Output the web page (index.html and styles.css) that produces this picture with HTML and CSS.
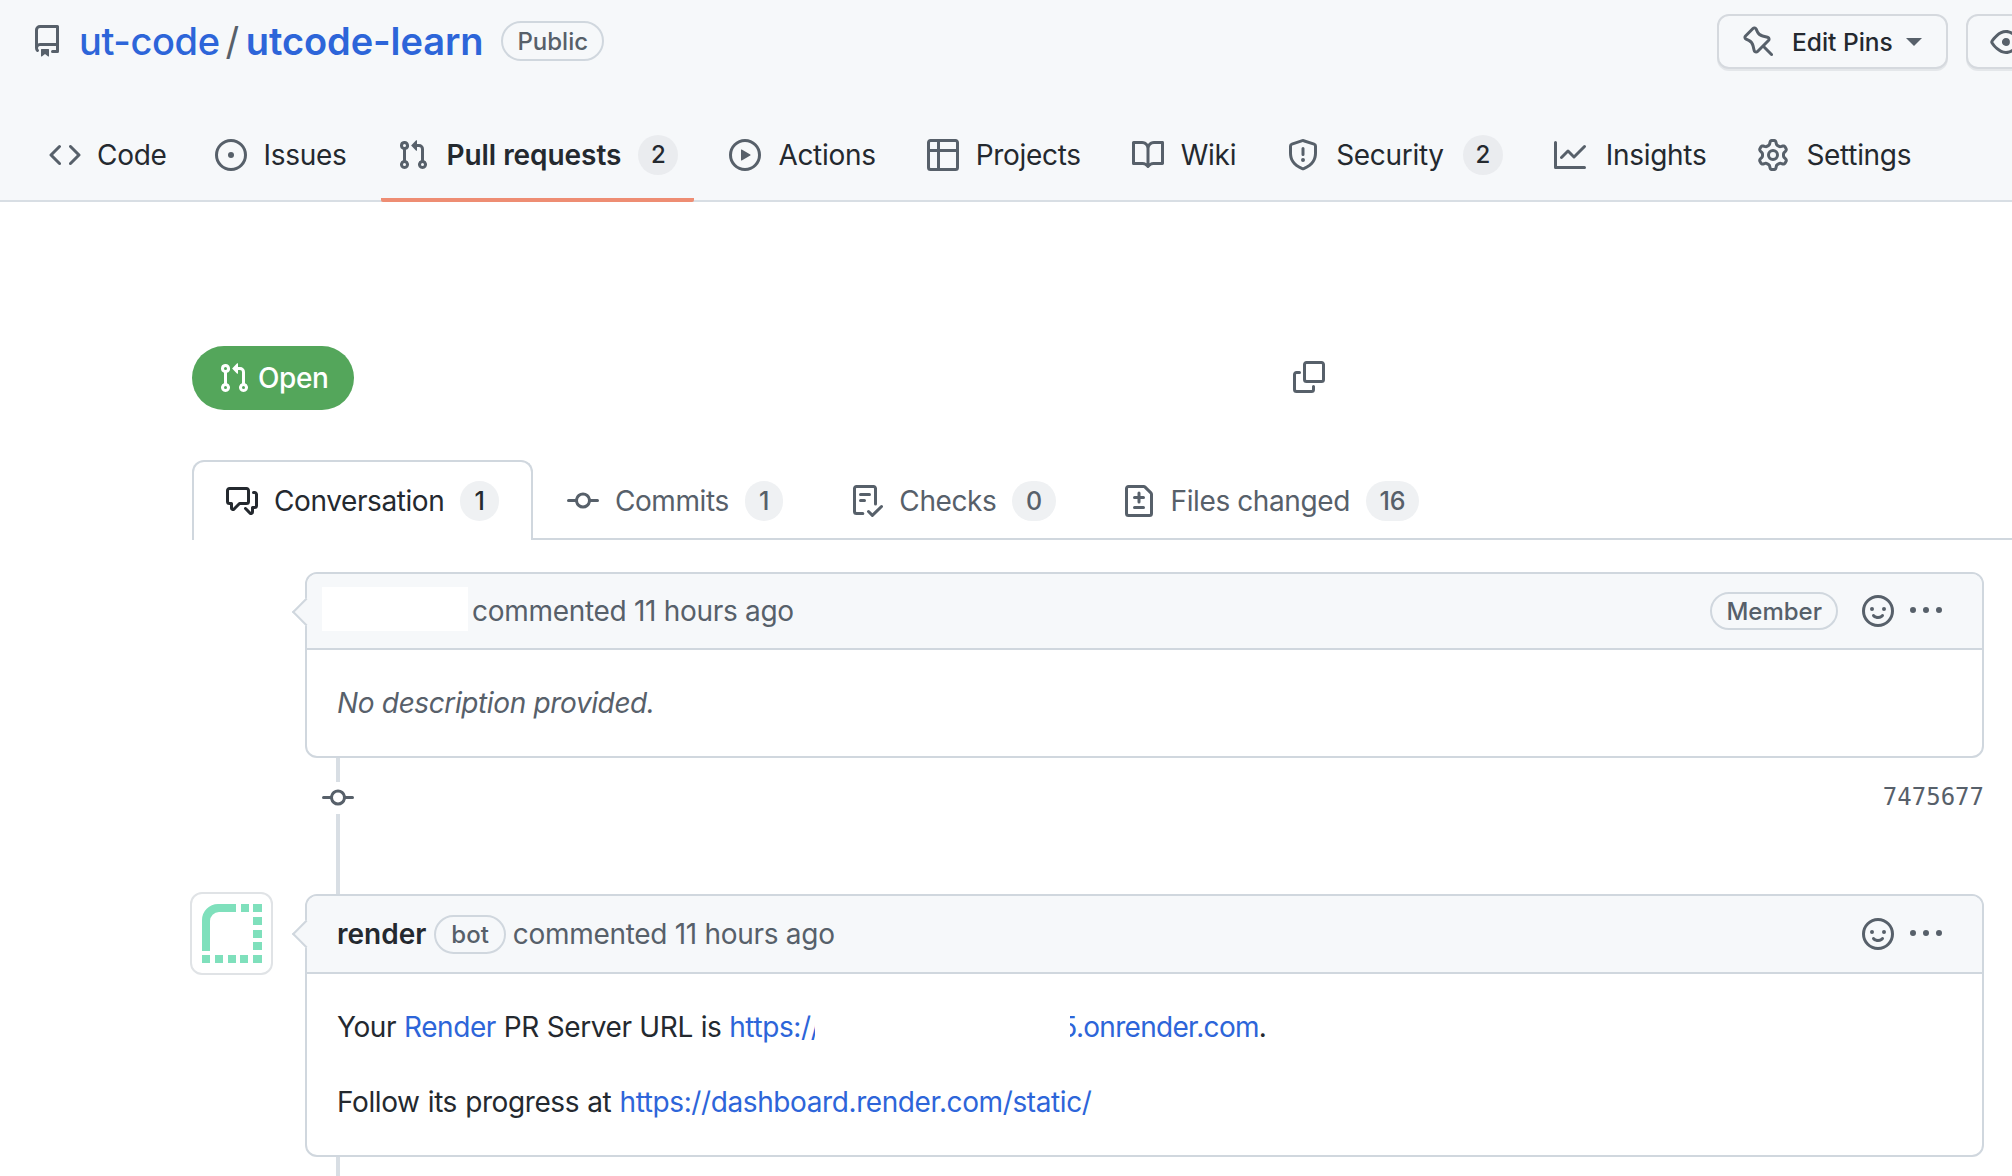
FILE: index.html
```html
<!DOCTYPE html>
<html lang="en">
<head>
    <meta charset="UTF-8">
    <meta name="viewport" content="width=device-width, initial-scale=1.0">
    <title>Pull request - ut-code/utcode-learn</title>
    <link rel="stylesheet" href="styles.css">
</head>
<body>
    <!-- icon sprite -->
    <svg class="sprite" aria-hidden="true">
        <symbol id="i-repo" viewBox="0 0 16 16"><path d="M2 2.5A2.5 2.5 0 0 1 4.5 0h8.75a.75.75 0 0 1 .75.75v12.5a.75.75 0 0 1-.75.75h-2.5a.75.75 0 0 1 0-1.5h1.75v-2h-8a1 1 0 0 0-.714 1.7.75.75 0 1 1-1.072 1.05A2.495 2.495 0 0 1 2 11.5Zm10.5-1h-8a1 1 0 0 0-1 1v6.708A2.486 2.486 0 0 1 4.5 9h8ZM5 12.25a.25.25 0 0 1 .25-.25h3.5a.25.25 0 0 1 .25.25v3.25a.25.25 0 0 1-.4.2l-1.45-1.087a.249.249 0 0 0-.3 0L5.4 15.7a.25.25 0 0 1-.4-.2Z"/></symbol>
        <symbol id="i-pin" viewBox="0 0 16 16"><path d="M4.456.734a1.75 1.75 0 0 1 2.826.504l.613 1.327a3.081 3.081 0 0 0 2.084 1.707l2.454.584c1.332.317 1.8 1.972.832 2.94L11.06 10l3.72 3.72a.748.748 0 0 1-.332 1.265.75.75 0 0 1-.729-.205L10 11.06l-2.204 2.205c-.968.968-2.623.5-2.94-.832l-.584-2.454a3.081 3.081 0 0 0-1.707-2.084l-1.327-.613a1.75 1.75 0 0 1-.504-2.826L4.456.734ZM5.92 1.866a.25.25 0 0 0-.404-.072L1.794 5.516a.25.25 0 0 0 .072.404l1.328.613A4.582 4.582 0 0 1 5.73 9.63l.584 2.454a.25.25 0 0 0 .42.12l5.47-5.47a.25.25 0 0 0-.12-.42l-2.454-.584a4.583 4.583 0 0 1-3.098-2.537Z"/></symbol>
        <symbol id="i-eye" viewBox="0 0 16 16"><path d="M8 2c1.981 0 3.671.992 4.933 2.078 1.27 1.091 2.187 2.345 2.637 3.023a1.62 1.62 0 0 1 0 1.798c-.45.678-1.367 1.932-2.637 3.023C11.67 13.008 9.981 14 8 14c-1.981 0-3.671-.992-4.933-2.078C1.797 10.83.88 9.576.43 8.898a1.62 1.62 0 0 1 0-1.798c.45-.677 1.367-1.931 2.637-3.022C4.33 2.992 6.019 2 8 2ZM1.679 7.932a.12.12 0 0 0 0 .136c.411.622 1.241 1.75 2.366 2.717C5.176 11.758 6.527 12.5 8 12.5c1.473 0 2.825-.742 3.955-1.715 1.124-.967 1.954-2.096 2.366-2.717a.12.12 0 0 0 0-.136c-.412-.621-1.242-1.75-2.366-2.717C10.824 4.242 9.473 3.5 8 3.5c-1.473 0-2.825.742-3.955 1.715-1.124.967-1.954 2.096-2.366 2.717ZM8 10a2 2 0 1 1-.001-3.999A2 2 0 0 1 8 10Z"/></symbol>
        <symbol id="i-code" viewBox="0 0 16 16"><path d="m11.28 3.22 4.25 4.25a.75.75 0 0 1 0 1.06l-4.25 4.25a.749.749 0 0 1-1.275-.326.749.749 0 0 1 .215-.734L13.94 8l-3.72-3.72a.749.749 0 0 1 .326-1.275.749.749 0 0 1 .734.215Zm-6.56 0a.751.751 0 0 1 1.042.018.751.751 0 0 1 .018 1.042L2.06 8l3.72 3.72a.749.749 0 0 1-.326 1.275.749.749 0 0 1-.734-.215L.47 8.53a.75.75 0 0 1 0-1.06Z"/></symbol>
        <symbol id="i-issue" viewBox="0 0 16 16"><path d="M8 9.5a1.5 1.5 0 1 0 0-3 1.5 1.5 0 0 0 0 3Z"/><path d="M8 0a8 8 0 1 1 0 16A8 8 0 0 1 8 0ZM1.5 8a6.5 6.5 0 1 0 13 0 6.5 6.5 0 0 0-13 0Z"/></symbol>
        <symbol id="i-pull" viewBox="0 0 16 16"><path d="M1.5 3.25a2.25 2.25 0 1 1 3 2.122v5.256a2.251 2.251 0 1 1-1.5 0V5.372A2.25 2.25 0 0 1 1.5 3.25Zm5.677-.177L9.573.677A.25.25 0 0 1 10 .854V2.5h1A2.5 2.5 0 0 1 13.5 5v5.628a2.251 2.251 0 1 1-1.5 0V5a1 1 0 0 0-1-1h-1v1.646a.25.25 0 0 1-.427.177L7.177 3.427a.25.25 0 0 1 0-.354ZM3.75 2.5a.75.75 0 1 0 0 1.5.75.75 0 0 0 0-1.5Zm0 9.5a.75.75 0 1 0 0 1.5.75.75 0 0 0 0-1.5Zm8.25.75a.75.75 0 1 0 1.5 0 .75.75 0 0 0-1.5 0Z"/></symbol>
        <symbol id="i-play" viewBox="0 0 16 16"><path d="M8 0a8 8 0 1 1 0 16A8 8 0 0 1 8 0ZM1.5 8a6.5 6.5 0 1 0 13 0 6.5 6.5 0 0 0-13 0Zm4.879-2.773 4.264 2.559a.25.25 0 0 1 0 .428l-4.264 2.559A.25.25 0 0 1 6 10.559V5.442a.25.25 0 0 1 .379-.215Z"/></symbol>
        <symbol id="i-table" viewBox="0 0 16 16"><path d="M0 1.75C0 .784.784 0 1.75 0h12.5C15.216 0 16 .784 16 1.75v12.5A1.75 1.75 0 0 1 14.25 16H1.75A1.75 1.75 0 0 1 0 14.25ZM6.5 6.5v8h7.75a.25.25 0 0 0 .25-.25V6.5Zm8-1.5V1.75a.25.25 0 0 0-.25-.25H6.5V5Zm-13 1.5v7.75c0 .138.112.25.25.25H5v-8ZM5 5V1.5H1.75a.25.25 0 0 0-.25.25V5Z"/></symbol>
        <symbol id="i-book" viewBox="0 0 16 16"><path d="M0 1.75A.75.75 0 0 1 .75 1h4.253c1.227 0 2.317.59 3 1.501A3.743 3.743 0 0 1 11.006 1h4.245a.75.75 0 0 1 .75.75v10.5a.75.75 0 0 1-.75.75h-4.507a2.25 2.25 0 0 0-1.591.659l-.622.621a.75.75 0 0 1-1.06 0l-.622-.621A2.25 2.25 0 0 0 5.258 13H.75a.75.75 0 0 1-.75-.75Zm7.251 10.324.004-5.073-.002-2.253A2.25 2.25 0 0 0 5.003 2.5H1.5v9h3.757a3.75 3.75 0 0 1 1.994.574ZM8.755 4.75l-.004 7.322a3.752 3.752 0 0 1 1.992-.572H14.5v-9h-3.495a2.25 2.25 0 0 0-2.25 2.25Z"/></symbol>
        <symbol id="i-shield" viewBox="0 0 16 16"><path d="M7.467.133a1.748 1.748 0 0 1 1.066 0l5.25 1.68A1.75 1.75 0 0 1 15 3.48V7c0 1.566-.32 3.182-1.303 4.682-.983 1.498-2.585 2.813-5.032 3.855a1.697 1.697 0 0 1-1.33 0c-2.447-1.042-4.049-2.357-5.032-3.855C1.32 10.182 1 8.566 1 7V3.48a1.75 1.75 0 0 1 1.217-1.667Zm.61 1.429a.25.25 0 0 0-.153 0l-5.25 1.68a.25.25 0 0 0-.174.238V7c0 1.358.275 2.666 1.057 3.86.784 1.194 2.121 2.34 4.366 3.297a.196.196 0 0 0 .154 0c2.245-.956 3.582-2.104 4.366-3.298C13.225 9.666 13.5 8.36 13.5 7V3.48a.251.251 0 0 0-.174-.237l-5.25-1.68ZM8.75 4.75v3a.75.75 0 0 1-1.5 0v-3a.75.75 0 0 1 1.5 0ZM9 10.5a1 1 0 1 1-2 0 1 1 0 0 1 2 0Z"/></symbol>
        <symbol id="i-graph" viewBox="0 0 16 16"><path d="M1.5 1.75V13.5h13.75a.75.75 0 0 1 0 1.5H.75a.75.75 0 0 1-.75-.75V1.75a.75.75 0 0 1 1.5 0Zm14.28 2.53-5.25 5.25a.75.75 0 0 1-1.06 0L7 7.06 4.28 9.78a.751.751 0 0 1-1.042-.018.751.751 0 0 1-.018-1.042l3.25-3.25a.75.75 0 0 1 1.06 0L10 7.94l4.72-4.72a.751.751 0 0 1 1.042.018.751.751 0 0 1 .018 1.042Z"/></symbol>
        <symbol id="i-gear" viewBox="0 0 16 16"><path d="M8 0a8.2 8.2 0 0 1 .701.031C9.444.095 9.99.645 10.16 1.29l.288 1.107c.018.066.079.158.212.224.231.114.454.243.668.386.123.082.233.09.299.071l1.103-.303c.644-.176 1.392.021 1.82.63.27.385.506.792.704 1.218.315.675.111 1.422-.364 1.891l-.814.806c-.049.048-.098.147-.088.294.016.257.016.515 0 .772-.01.147.038.246.088.294l.814.806c.475.469.679 1.216.364 1.891a7.977 7.977 0 0 1-.704 1.217c-.428.61-1.176.807-1.82.63l-1.102-.302c-.067-.019-.177-.011-.3.071a5.909 5.909 0 0 1-.668.386c-.133.066-.194.158-.211.224l-.29 1.106c-.168.646-.715 1.196-1.458 1.26a8.006 8.006 0 0 1-1.402 0c-.743-.064-1.289-.614-1.458-1.26l-.289-1.106c-.018-.066-.079-.158-.212-.224a5.738 5.738 0 0 1-.668-.386c-.123-.082-.233-.09-.299-.071l-1.103.303c-.644.176-1.392-.021-1.82-.63a8.12 8.12 0 0 1-.704-1.218c-.315-.675-.111-1.422.363-1.891l.815-.806c.05-.048.098-.147.088-.294a6.214 6.214 0 0 1 0-.772c.01-.147-.038-.246-.088-.294l-.815-.806C.635 6.045.431 5.298.746 4.623a7.92 7.92 0 0 1 .704-1.217c.428-.61 1.176-.807 1.82-.63l1.102.302c.067.019.177.011.3-.071.214-.143.437-.272.668-.386.133-.066.194-.158.211-.224l.29-1.106C6.009.645 6.556.095 7.299.03 7.53.01 7.764 0 8 0Zm-.571 1.525c-.036.003-.108.036-.137.146l-.289 1.105c-.147.561-.549.967-.998 1.189-.173.086-.34.183-.5.29-.417.278-.97.423-1.529.27l-1.103-.303c-.109-.03-.175.016-.195.045-.22.312-.412.644-.573.99-.014.031-.021.11.059.19l.815.806c.411.406.562.957.53 1.456a4.709 4.709 0 0 0 0 .582c.032.499-.119 1.05-.53 1.456l-.815.806c-.081.08-.073.159-.059.19.162.346.353.677.573.989.02.03.085.076.195.046l1.102-.303c.56-.153 1.113-.008 1.53.27.161.107.328.204.501.29.447.222.85.629.997 1.189l.289 1.105c.029.109.101.143.137.146a6.6 6.6 0 0 0 1.142 0c.036-.003.108-.036.137-.146l.289-1.105c.147-.561.549-.967.998-1.189.173-.086.34-.183.5-.29.417-.278.97-.423 1.529-.27l1.103.303c.109.029.175-.016.195-.045.22-.313.411-.644.573-.99.014-.031.021-.11-.059-.19l-.815-.806c-.411-.406-.562-.957-.53-1.456a4.709 4.709 0 0 0 0-.582c-.032-.499.119-1.05.53-1.456l.815-.806c.081-.08.073-.159.059-.19a6.464 6.464 0 0 0-.573-.989c-.02-.03-.085-.076-.195-.046l-1.102.303c-.56.153-1.113.008-1.53-.27a4.44 4.44 0 0 0-.501-.29c-.447-.222-.85-.629-.997-1.189l-.289-1.105c-.029-.11-.101-.143-.137-.146a6.6 6.6 0 0 0-1.142 0ZM11 8a3 3 0 1 1-6 0 3 3 0 0 1 6 0ZM9.5 8a1.5 1.5 0 1 0-3.001.001A1.5 1.5 0 0 0 9.5 8Z"/></symbol>
        <symbol id="i-copy" viewBox="0 0 16 16"><path d="M0 6.75C0 5.784.784 5 1.75 5h1.5a.75.75 0 0 1 0 1.5h-1.5a.25.25 0 0 0-.25.25v7.5c0 .138.112.25.25.25h7.5a.25.25 0 0 0 .25-.25v-1.5a.75.75 0 0 1 1.5 0v1.5A1.75 1.75 0 0 1 9.25 16h-7.5A1.75 1.75 0 0 1 0 14.25Z"/><path d="M5 1.75C5 .784 5.784 0 6.75 0h7.5C15.216 0 16 .784 16 1.75v7.5A1.75 1.75 0 0 1 14.25 11h-7.5A1.75 1.75 0 0 1 5 9.25Zm1.75-.25a.25.25 0 0 0-.25.25v7.5c0 .138.112.25.25.25h7.5a.25.25 0 0 0 .25-.25v-7.5a.25.25 0 0 0-.25-.25Z"/></symbol>
        <symbol id="i-discussion" viewBox="0 0 16 16"><path d="M1.75 1h8.5c.966 0 1.75.784 1.75 1.75v5.5A1.75 1.75 0 0 1 10.25 10H7.061l-2.574 2.573A1.458 1.458 0 0 1 2 11.543V10h-.25A1.75 1.75 0 0 1 0 8.25v-5.5C0 1.784.784 1 1.75 1ZM1.5 2.75v5.5c0 .138.112.25.25.25h1a.75.75 0 0 1 .75.75v2.19l2.72-2.72a.749.749 0 0 1 .53-.22h3.5a.25.25 0 0 0 .25-.25v-5.5a.25.25 0 0 0-.25-.25h-8.5a.25.25 0 0 0-.25.25Zm13 2a.25.25 0 0 0-.25-.25h-.5a.75.75 0 0 1 0-1.5h.5c.966 0 1.75.784 1.75 1.75v5.5A1.75 1.75 0 0 1 14.25 12H14v1.543a1.458 1.458 0 0 1-2.487 1.03L9.22 12.28a.749.749 0 0 1 .326-1.275.749.749 0 0 1 .734.215l2.22 2.22v-2.19a.75.75 0 0 1 .75-.75h1a.25.25 0 0 0 .25-.25Z"/></symbol>
        <symbol id="i-commit" viewBox="0 0 16 16"><path d="M11.93 8.5a4.002 4.002 0 0 1-7.86 0H.75a.75.75 0 0 1 0-1.5h3.32a4.002 4.002 0 0 1 7.86 0h3.32a.75.75 0 0 1 0 1.5Zm-1.43-.75a2.5 2.5 0 1 0-5 0 2.5 2.5 0 0 0 5 0Z"/></symbol>
        <symbol id="i-checklist" viewBox="0 0 16 16"><path d="M2.5 1.75v11.5c0 .138.112.25.25.25h3.17a.75.75 0 0 1 0 1.5H2.75A1.75 1.75 0 0 1 1 13.25V1.75C1 .784 1.784 0 2.75 0h8.5C12.216 0 13 .784 13 1.75v7.736a.75.75 0 0 1-1.5 0V1.75a.25.25 0 0 0-.25-.25h-8.5a.25.25 0 0 0-.25.25Zm13.274 9.537v-.001l-4.557 4.45a.75.75 0 0 1-1.055-.008l-1.943-1.95a.75.75 0 0 1 1.062-1.058l1.419 1.425 4.026-3.932a.75.75 0 1 1 1.048 1.074ZM4.75 4h4.5a.75.75 0 0 1 0 1.5h-4.5a.75.75 0 0 1 0-1.5ZM4 7.75A.75.75 0 0 1 4.75 7h2a.75.75 0 0 1 0 1.5h-2A.75.75 0 0 1 4 7.75Z"/></symbol>
        <symbol id="i-diff" viewBox="0 0 16 16"><path d="M1 1.75C1 .784 1.784 0 2.75 0h7.586c.464 0 .909.184 1.237.513l2.914 2.914c.329.328.513.773.513 1.237v9.586A1.75 1.75 0 0 1 13.25 16H2.75A1.75 1.75 0 0 1 1 14.25Zm1.75-.25a.25.25 0 0 0-.25.25v12.5c0 .138.112.25.25.25h10.5a.25.25 0 0 0 .25-.25V4.664a.25.25 0 0 0-.073-.177l-2.914-2.914a.25.25 0 0 0-.177-.073ZM8 3.25a.75.75 0 0 1 .75.75v1.5h1.5a.75.75 0 0 1 0 1.5h-1.5v1.5a.75.75 0 0 1-1.5 0V7h-1.5a.75.75 0 0 1 0-1.5h1.5V4A.75.75 0 0 1 8 3.25Zm-3 8a.75.75 0 0 1 .75-.75h4.5a.75.75 0 0 1 0 1.5h-4.5a.75.75 0 0 1-.75-.75Z"/></symbol>
        <symbol id="i-smiley" viewBox="0 0 16 16"><path d="M8 0a8 8 0 1 1 0 16A8 8 0 0 1 8 0ZM1.5 8a6.5 6.5 0 1 0 13 0 6.5 6.5 0 0 0-13 0Zm3.82 1.636a.75.75 0 0 1 1.038.175l.007.009c.103.118.22.222.35.31.264.178.683.37 1.285.37.602 0 1.02-.192 1.285-.371.13-.088.247-.192.35-.31l.007-.008a.75.75 0 0 1 1.222.87l-.022-.015c.02.013.021.015.021.015v.001l-.001.002-.002.003-.005.007-.014.019a2.066 2.066 0 0 1-.184.213c-.16.166-.338.316-.53.445-.63.418-1.37.638-2.127.629-.946 0-1.652-.308-2.126-.63a3.331 3.331 0 0 1-.715-.657l-.014-.02-.005-.006-.002-.003v-.002h-.001l.613-.432-.614.43a.75.75 0 0 1 .183-1.044ZM12 7a1 1 0 1 1-2 0 1 1 0 0 1 2 0ZM5 8a1 1 0 1 1 0-2 1 1 0 0 1 0 2Zm5.25 2.25.592.416a97.71 97.71 0 0 0-.592-.416Z"/></symbol>
        <symbol id="i-kebab" viewBox="0 0 16 16"><path d="M8 9a1.5 1.5 0 1 0 0-3 1.5 1.5 0 0 0 0 3ZM1.5 9a1.5 1.5 0 1 0 0-3 1.5 1.5 0 0 0 0 3Zm13 0a1.5 1.5 0 1 0 0-3 1.5 1.5 0 0 0 0 3Z"/></symbol>
    </svg>

    <header class="repohead">
        <div class="repohead-top">
            <div class="repo-title">
                <svg class="icon"><use href="#i-repo"/></svg>
                <a class="owner" href="#">ut-code</a>
                <span class="slash">/</span>
                <a class="repo-name" href="#">utcode-learn</a>
                <span class="label label-public">Public</span>
            </div>
            <div class="repo-actions">
                <button type="button" class="btn btn-pins">
                    <svg class="icon"><use href="#i-pin"/></svg>
                    <span>Edit Pins</span>
                    <span class="caret"></span>
                </button>
                <button type="button" class="btn btn-watch">
                    <svg class="icon"><use href="#i-eye"/></svg>
                </button>
            </div>
        </div>
        <nav class="repo-nav">
            <a class="nav-item nav-code" href="#"><svg class="icon"><use href="#i-code"/></svg>Code</a>
            <a class="nav-item" href="#"><svg class="icon"><use href="#i-issue"/></svg>Issues</a>
            <a class="nav-item selected" href="#"><svg class="icon"><use href="#i-pull"/></svg>Pull requests<span class="counter">2</span></a>
            <a class="nav-item" href="#"><svg class="icon"><use href="#i-play"/></svg>Actions</a>
            <a class="nav-item" href="#"><svg class="icon"><use href="#i-table"/></svg>Projects</a>
            <a class="nav-item" href="#"><svg class="icon"><use href="#i-book"/></svg>Wiki</a>
            <a class="nav-item nav-security" href="#"><svg class="icon"><use href="#i-shield"/></svg>Security<span class="counter">2</span></a>
            <a class="nav-item nav-insights" href="#"><svg class="icon"><use href="#i-graph"/></svg>Insights</a>
            <a class="nav-item" href="#"><svg class="icon"><use href="#i-gear"/></svg>Settings</a>
        </nav>
    </header>

    <main class="pr">
        <div class="pr-state">
            <span class="state-open"><svg class="icon"><use href="#i-pull"/></svg>Open</span>
            <svg class="icon copy"><use href="#i-copy"/></svg>
        </div>

        <div class="pr-tabs">
            <a class="tab selected" href="#"><svg class="icon"><use href="#i-discussion"/></svg>Conversation<span class="counter">1</span></a>
            <a class="tab" href="#"><svg class="icon"><use href="#i-commit"/></svg>Commits<span class="counter">1</span></a>
            <a class="tab tab-checks" href="#"><svg class="icon"><use href="#i-checklist"/></svg>Checks<span class="counter">0</span></a>
            <a class="tab" href="#"><svg class="icon"><use href="#i-diff"/></svg>Files changed<span class="counter">16</span></a>
        </div>

        <div class="discussion">
            <div class="comment">
                <div class="comment-head">
                    <span class="redacted-name"></span>
                    <span class="comment-time">commented 11 hours ago</span>
                    <span class="label label-member">Member</span>
                    <svg class="icon smiley"><use href="#i-smiley"/></svg>
                    <svg class="icon kebab"><use href="#i-kebab"/></svg>
                </div>
                <div class="comment-body">
                    <p class="no-desc">No description provided.</p>
                </div>
            </div>

            <div class="commit-row">
                <svg class="icon commit-icon"><use href="#i-commit"/></svg>
                <a class="commit-sha" href="#">7475677</a>
            </div>

            <div class="comment-row">
                <div class="avatar">
                    <svg viewBox="0 0 60 60">
                        <path d="M0 47V16A16 16 0 0 1 16 0H34V8H17A9 9 0 0 0 8 17V47Z"/>
                        <rect x="39" width="8" height="8"/><rect x="51" width="9" height="8"/>
                        <rect x="51" y="13" width="9" height="8"/><rect x="51" y="26" width="9" height="8"/><rect x="51" y="38" width="9" height="8"/>
                        <rect y="51" width="8" height="8"/><rect x="13" y="51" width="8" height="8"/><rect x="26" y="51" width="8" height="8"/><rect x="38" y="51" width="8" height="8"/><rect x="51" y="51" width="9" height="8"/>
                    </svg>
                </div>
                <div class="comment">
                    <div class="comment-head comment-head-tall">
                        <a class="author" href="#">render</a>
                        <span class="label label-bot">bot</span>
                        <span class="comment-time">commented 11 hours ago</span>
                        <svg class="icon smiley"><use href="#i-smiley"/></svg>
                        <svg class="icon kebab"><use href="#i-kebab"/></svg>
                    </div>
                    <div class="comment-body">
                        <p>Your <a href="#">Render</a> PR Server URL is <a href="#">https://<span class="redacted-url"></span><span class="url-end">5.onrender.com</span></a>.</p>
                        <p>Follow its progress at <a href="#">https://dashboard.render.com/static/</a></p>
                    </div>
                </div>
            </div>
            <div class="timeline-tail"></div>
        </div>
    </main>
</body>
</html>
```

FILE: styles.css
```css
html, body {
    margin: 0;
    height: 1176px;
    overflow: hidden;
}
body {
    font-family: Inter, "Liberation Sans", sans-serif;
    font-size: 28px;
    letter-spacing: -0.4px;
    color: #24292f;
    background: #fff;
}
a {
    color: #2d65d9;
    text-decoration: none;
}
.sprite {
    display: none;
}
.icon {
    width: 32px;
    height: 32px;
    fill: #57606a;
    flex: none;
}

/* repo header */
.repohead {
    height: 202px;
    background: #f6f8fa;
    box-shadow: inset 0 -2px #d8dee4;
    overflow: hidden;
}
.repohead-top {
    display: flex;
    justify-content: space-between;
    height: 106px;
    padding: 14px 0 0 31px;
    box-sizing: border-box;
}
.repo-title {
    display: flex;
    align-items: center;
    height: 54px;
    font-size: 38px;
}
.owner {
    margin-left: 16px;
    font-weight: 500;
}
.slash {
    margin: 0 7px 0 6px;
    color: #57606a;
}
.repo-name {
    font-weight: 600;
    letter-spacing: -0.1px;
}
.label {
    display: inline-flex;
    align-items: center;
    box-sizing: border-box;
    border: 2px solid #d0d7de;
    border-radius: 40px;
    font-size: 24px;
    font-weight: 500;
    letter-spacing: 0;
    color: #57606a;
}
.label-public {
    height: 40px;
    padding: 0 14px;
    margin-left: 18px;
}
.repo-actions {
    display: flex;
    gap: 18px;
    margin-right: -100px;
}
.btn {
    display: flex;
    align-items: center;
    height: 55px;
    box-sizing: border-box;
    border: 2px solid #d5d9de;
    border-radius: 12px;
    background: #f6f8fa;
    box-shadow: 0 2px 0 #e4e7ea;
    font-family: inherit;
    font-size: 24.5px;
    font-weight: 500;
    color: #24292f;
}
.btn-pins {
    width: 231px;
    padding: 0 0 0 24px;
    gap: 17px;
}
.btn-watch {
    width: 146px;
    padding: 0 0 0 22px;
}
.caret {
    width: 0;
    height: 0;
    margin-left: -4px;
    border: 8px solid transparent;
    border-top-color: #57606a;
    border-bottom: 0;
}

.repo-nav {
    display: flex;
    gap: 19px;
    padding-left: 33px;
}
.nav-item {
    display: flex;
    align-items: center;
    gap: 17px;
    height: 96px;
    padding: 5px 16px 0;
    box-sizing: border-box;
    border-bottom: 4px solid transparent;
    letter-spacing: -0.3px;
    color: #24292f;
}
.nav-code {
    gap: 16px;
    margin-right: -3px;
}
.nav-security .counter {
    margin-left: 2px;
}
.nav-insights {
    gap: 20px;
}
.nav-item.selected {
    font-weight: 600;
    letter-spacing: -0.05px;
    border-bottom-color: #ee8d73;
    border-radius: 0 0 2px 2px;
}
.counter {
    display: inline-flex;
    align-items: center;
    justify-content: center;
    box-sizing: border-box;
    height: 40px;
    min-width: 40px;
    padding: 0 12px;
    border-radius: 40px;
    background: #eaecef;
    font-size: 24px;
    font-weight: 500;
    letter-spacing: 0;
    color: #24292f;
}

/* pull request */
.pr {
    padding: 144px 28px 0 192px;
}
.pr-state {
    display: flex;
    align-items: center;
    height: 64px;
}
.state-open {
    display: flex;
    align-items: center;
    gap: 8px;
    width: 162px;
    height: 64px;
    box-sizing: border-box;
    padding-left: 26px;
    border-radius: 32px;
    background: #54a65b;
    color: #fff;
    font-weight: 500;
}
.state-open .icon {
    fill: #fff;
}
.copy {
    margin-left: 939px;
    margin-top: -2px;
}

.pr-tabs {
    display: flex;
    height: 80px;
    box-sizing: border-box;
    margin: 50px -28px 0 0;
    border-bottom: 2px solid #d0d7de;
}
.tab {
    display: flex;
    align-items: center;
    gap: 16px;
    height: 80px;
    box-sizing: border-box;
    padding: 0 32px;
    border: 2px solid transparent;
    border-bottom: 0;
    border-radius: 12px 12px 0 0;
    color: #57606a;
}
.tab-checks {
    margin-right: -1px;
}
.tab.selected {
    border-color: #d0d7de;
    background: #fff;
    color: #24292f;
}
.tab.selected .icon {
    fill: #24292f;
}
.tab .counter {
    min-width: 38.5px;
    padding: 0 13.5px;
    font-size: 25px;
    color: #57606a;
    background: #eff1f3;
}
.tab.selected .counter {
    color: #24292f;
}

/* timeline */
.discussion {
    margin: 32px 0 0 113px;
}
.comment {
    flex: 1;
    box-sizing: border-box;
    border: 2px solid #d0d7de;
    border-radius: 12px;
    position: relative;
}
.comment::before {
    content: "";
    position: absolute;
    left: -11px;
    top: 28px;
    width: 18px;
    height: 18px;
    background: #f6f8fa;
    border-left: 2px solid #d0d7de;
    border-bottom: 2px solid #d0d7de;
    transform: rotate(45deg);
}
.comment-head {
    display: flex;
    align-items: center;
    height: 76px;
    box-sizing: border-box;
    padding: 0 40px 0 30px;
    background: #f6f8fa;
    border-bottom: 2px solid #d0d7de;
    border-radius: 10px 10px 0 0;
    color: #57606a;
}
.comment-head-tall {
    height: 78px;
}
.redacted-name {
    width: 146px;
    height: 44px;
    margin: -4px 4px 0 -15px;
    background: #fff;
}
.comment-time {
    letter-spacing: -0.3px;
}
.author {
    font-weight: 600;
    letter-spacing: 0;
    color: #24292f;
}
.label-member {
    height: 38px;
    padding: 0 14px;
    margin-left: auto;
}
.label-bot {
    height: 39px;
    padding: 0 15px;
    margin: 0 7px 0 8px;
}
.smiley {
    margin-left: 24px;
}
.comment-time + .smiley {
    margin-left: auto;
}
.kebab {
    margin-left: 16px;
}
.comment-body {
    padding: 32px 30px;
    line-height: 42px;
}
.comment-body p {
    margin: 0 0 31px;
    word-spacing: 0.3px;
}
.comment-body p:last-child {
    margin-bottom: 0;
}
.comment-body p + p {
    word-spacing: 0.7px;
}
.no-desc {
    font-style: italic;
    color: #57606a;
}
.redacted-url {
    display: inline-block;
    position: relative;
    vertical-align: middle;
    width: 255px;
    height: 42px;
    margin: 0 -10px 0 -5px;
    background: #fff;
}
.url-end {
    letter-spacing: -0.7px;
}
.commit-row {
    display: flex;
    justify-content: space-between;
    height: 136px;
    box-sizing: border-box;
    padding-top: 24px;
    margin-left: 31px;
    border-left: 4px solid #d8dee4;
}
.commit-icon {
    margin-left: -18px;
    background: #fff;
}
.commit-sha {
    font-family: "DejaVu Sans Mono", "Liberation Mono", monospace;
    font-size: 24px;
    letter-spacing: 0;
    line-height: 30px;
    color: #57606a;
}
.comment-row {
    display: flex;
    margin-left: -115px;
}
.avatar {
    display: flex;
    align-items: center;
    justify-content: center;
    width: 83px;
    height: 83px;
    box-sizing: border-box;
    margin: -2px 32px 0 0;
    border: 2px solid #e0e3e6;
    border-radius: 12px;
    background: #fff;
}
.avatar svg {
    width: 60px;
    height: 60px;
    fill: #7fe0bc;
}
.timeline-tail {
    height: 40px;
    margin-left: 31px;
    border-left: 4px solid #d8dee4;
}
```
